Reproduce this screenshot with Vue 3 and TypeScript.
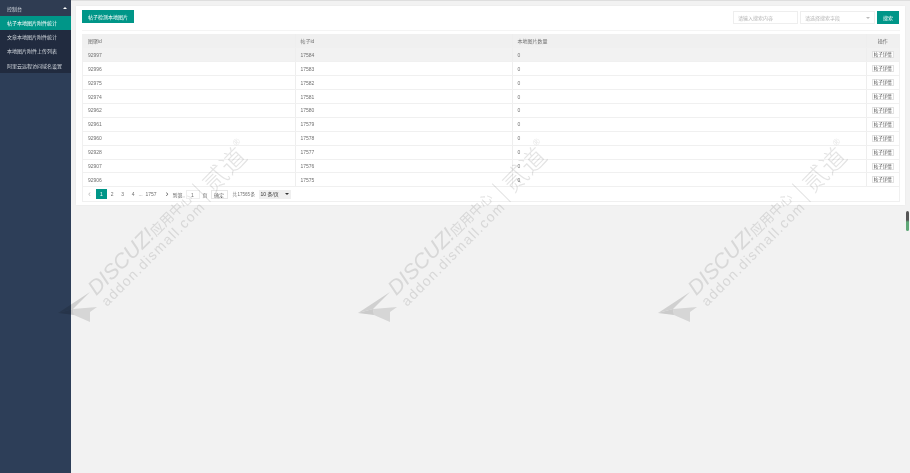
<script setup lang="ts">
const menu = ['文章本地图片附件统计', '本地图片附件上传列表', '阿里云远程访问域名设置']
const rows = [
  ['92997', '17584'], ['92996', '17583'], ['92975', '17582'], ['92974', '17581'],
  ['92962', '17580'], ['92961', '17579'], ['92960', '17578'], ['92928', '17577'],
  ['92907', '17576'], ['92906', '17575'],
]
const pages = ['2', '3', '4']
const marks = [0, 1, 2]
</script>

<template>
  <div class="page">
    <aside class="side">
      <div class="side-title"><span>控制台</span><i class="caret"></i></div>
      <div class="side-item active">帖子本地图片附件统计</div>
      <div v-for="m in menu" :key="m" class="side-item">{{ m }}</div>
    </aside>
    <main class="main">
      <section class="card">
        <div class="toolbar">
          <button class="btn btn-wide">帖子检测本地图片</button>
          <div class="search">
            <div class="input">请输入搜索内容</div>
            <div class="input select"><span>请选择搜索字段</span><i class="down"></i></div>
            <button class="btn btn-search">搜索</button>
          </div>
        </div>
        <div class="tablewrap">
          <table>
            <colgroup>
              <col class="c1" /><col class="c2" /><col class="c3" /><col class="c4" />
            </colgroup>
            <thead>
              <tr><th>图聚id</th><th>帖子id</th><th>本地图片数量</th><th class="ctr">操作</th></tr>
            </thead>
            <tbody>
              <tr v-for="(r, i) in rows" :key="r[0]" :class="{ hover: i === 0 }">
                <td>{{ r[0] }}</td><td>{{ r[1] }}</td><td>0</td>
                <td class="ctr"><span class="mini">帖子详情</span></td>
              </tr>
            </tbody>
          </table>
          <div class="pager">
            <span class="pg arrow">‹</span>
            <span class="pg cur">1</span>
            <span v-for="p in pages" :key="p" class="pg">{{ p }}</span>
            <span class="pg dots">...</span>
            <span class="pg last">1757</span>
            <span class="pg arrow dark">›</span>
            <span class="goto">到第</span>
            <span class="box">1</span>
            <span class="goto page-unit">页</span>
            <span class="ok">确定</span>
            <span class="total">共 17565 条</span>
            <span class="size">10 条/页<i class="down dark"></i></span>
          </div>
        </div>
      </section>
    </main>
    <div class="marks" aria-hidden="true">
      <div v-for="k in marks" :key="k" class="mark" :style="{ left: 55 + k * 300 + 'px' }">
        <svg class="plane" width="40" height="31" viewBox="0 0 40 31">
          <path d="M0 21 L32 0 L15 17 Z" fill="#dcdcdc" />
          <path d="M15 17 L39 15 L32 20 L32 30 L16 23 Z" fill="#e2e2e2" />
          <path d="M0 21 L15 17 L16 23 Z" fill="#d6d6d6" />
        </svg>
        <div class="mark-text">
          <div class="mark-col">
            <div class="mark-1">DISCUZ!<span class="cjk">应用中心</span></div>
            <div class="mark-2">addon.dismall.com</div>
          </div>
          <span class="bar"></span>
          <span class="big">贰道</span>
          <span class="reg">®</span>
        </div>
      </div>
    </div>
    <div class="scrollmark"></div>
  </div>
</template>

<style>
html, body { margin: 0; padding: 0; overflow: hidden; }
</style>

<style scoped>
.page {
  position: relative;
  width: 910px;
  height: 473px;
  overflow: hidden;
  display: flex;
  background: #f2f2f2;
  font-family: "Liberation Sans", "Noto Sans CJK SC", sans-serif;
  color: #707070;
  font-size: 5px;
  filter: blur(0.3px);
}
.side {
  width: 71px;
  flex: none;
  background: #2d3e58;
  color: #d5dae0;
}
.side-title {
  height: 16px;
  padding: 0 4px 0 7px;
  display: flex;
  align-items: center;
  justify-content: space-between;
  background: #2f3c52;
}
.caret {
  width: 0;
  height: 0;
  border: 2.5px solid transparent;
  border-top: 0;
  border-bottom: 2.5px solid #fff;
}
.side-item {
  height: 14.2px;
  line-height: 14.2px;
  padding-left: 7px;
  background: #212b3f;
  white-space: nowrap;
}
.side-item.active {
  background: #009688;
  color: #fff;
}
.main {
  flex: 1;
  min-width: 0;
  padding: 5px 5px 0;
  border-top: 1px solid #dedede;
  box-sizing: border-box;
}
.card {
  background: #fff;
  height: 199px;
  box-sizing: border-box;
  padding: 4px 5px 0 6px;
  box-shadow: 0 0 2px rgba(0, 0, 0, 0.05);
}
.toolbar {
  display: flex;
  justify-content: space-between;
  align-items: flex-start;
  height: 13px;
  border-bottom: 1px solid #f4f4f4;
  padding: 0 1px 7px 0;
  box-sizing: content-box;
  margin-bottom: 3px;
}
.btn {
  border: 0;
  background: #009688;
  color: #fff;
  font: inherit;
  padding: 0;
  height: 13px;
}
.btn-wide { width: 52px; }
.btn-search { width: 22px; height: 13px; margin-left: 2px; }
.search { display: flex; align-items: center; margin-top: 1px; }
.input {
  width: 65px;
  height: 13px;
  line-height: 12px;
  box-sizing: border-box;
  border: 1px solid #eee;
  padding-left: 4px;
  color: #b5b5b5;
}
.select {
  width: 75px;
  margin-left: 2px;
  display: flex;
  align-items: center;
  justify-content: space-between;
  padding-right: 4px;
}
.down {
  display: inline-block;
  width: 0;
  height: 0;
  border: 2px solid transparent;
  border-bottom: 0;
  border-top: 2px solid #bbb;
}
.down.dark { border-top-color: #333; }
.tablewrap {
  border: 1px solid #f0f0f0;
  border-top: 0;
}
table {
  width: 100%;
  table-layout: fixed;
  border-collapse: collapse;
}
.c1 { width: 212px; }
.c2 { width: 217px; }
.c4 { width: 33px; }
th, td {
  height: 13.9px;
  padding: 0 0 0 5px;
  box-sizing: border-box;
  font-weight: 400;
  text-align: left;
  border-bottom: 1px solid #f0f0f0;
  border-left: 1px solid #eee;
  white-space: nowrap;
}
th:first-child, td:first-child { border-left: 0; }
thead tr { background: #f0f0f0; }
tr.hover { background: #f2f2f2; }
th.ctr, td.ctr { text-align: center; padding: 0; }
.mini {
  display: inline-block;
  width: 22px;
  height: 7px;
  line-height: 6px;
  box-sizing: border-box;
  border: 1px solid #e2e2e2;
  background: #fff;
  color: #555;
  font-size: 4.5px;
  vertical-align: middle;
}
.pager {
  height: 14px;
  display: flex;
  align-items: center;
  white-space: nowrap;
}
.pg {
  width: 10.5px;
  text-align: center;
  line-height: 10px;
  height: 10px;
}
.pg.cur { width: 11px; background: #009688; color: #fff; }
.pg.arrow { font-size: 9px; color: #bbb; width: 13px; }
.pg.arrow.dark { color: #555; margin-left: 1px; }
.pg.dots { width: 4px; }
.pg.last { width: 17px; }
.goto { width: 10px; text-align: center; margin-left: -1px; }
.page-unit { width: 5px; margin: 0 3px 0 3px; }
.box {
  width: 14px;
  height: 9px;
  line-height: 8px;
  box-sizing: border-box;
  border: 1px solid #eee;
  text-align: center;
  margin-left: 3px;
}
.ok {
  width: 17px;
  height: 9px;
  line-height: 8px;
  box-sizing: border-box;
  border: 1px solid #e6e6e6;
  text-align: center;
  margin-right: 5px;
}
.total { width: 22px; margin-right: 4px; font-size: 4.5px; word-spacing: -0.8px; }
.size {
  width: 32px;
  height: 9px;
  line-height: 9px;
  background: #efefef;
  color: #333;
  padding: 0 2px;
  box-sizing: border-box;
  display: flex;
  align-items: center;
  justify-content: space-between;
}
.marks {
  position: absolute;
  inset: 0;
  pointer-events: none;
  mix-blend-mode: multiply;
}
.mark {
  position: absolute;
  top: 130px;
  width: 200px;
  height: 200px;
}
.plane {
  position: absolute;
  left: 3px;
  top: 162px;
}
.mark-text {
  position: absolute;
  left: 30px;
  top: 155px;
  height: 34px;
  transform-origin: 0 0;
  transform: rotate(-45deg);
  color: #e4e4e4;
  white-space: nowrap;
  display: flex;
  align-items: center;
}
.mark-col { width: 141px; }
.mark-1 {
  font-size: 21px;
  font-style: italic;
  line-height: 18px;
  height: 18px;
}
.cjk { font-style: normal; font-size: 13.5px; }
.big { font-size: 25px; line-height: 30px; font-weight: 300; }
.bar {
  width: 1px;
  height: 26px;
  background: #e4e4e4;
  margin: 0 7px 0 6px;
}
.reg { font-size: 9px; align-self: flex-start; margin-top: 1px; }
.mark-2 {
  font-size: 14px;
  letter-spacing: 1.4px;
  line-height: 16px;
  height: 16px;
}
.scrollmark {
  position: absolute;
  left: 906px;
  top: 211px;
  width: 3px;
  height: 20px;
  border-radius: 2px;
  background: linear-gradient(#555 0 45%, #5fa777 55% 100%);
}
</style>
